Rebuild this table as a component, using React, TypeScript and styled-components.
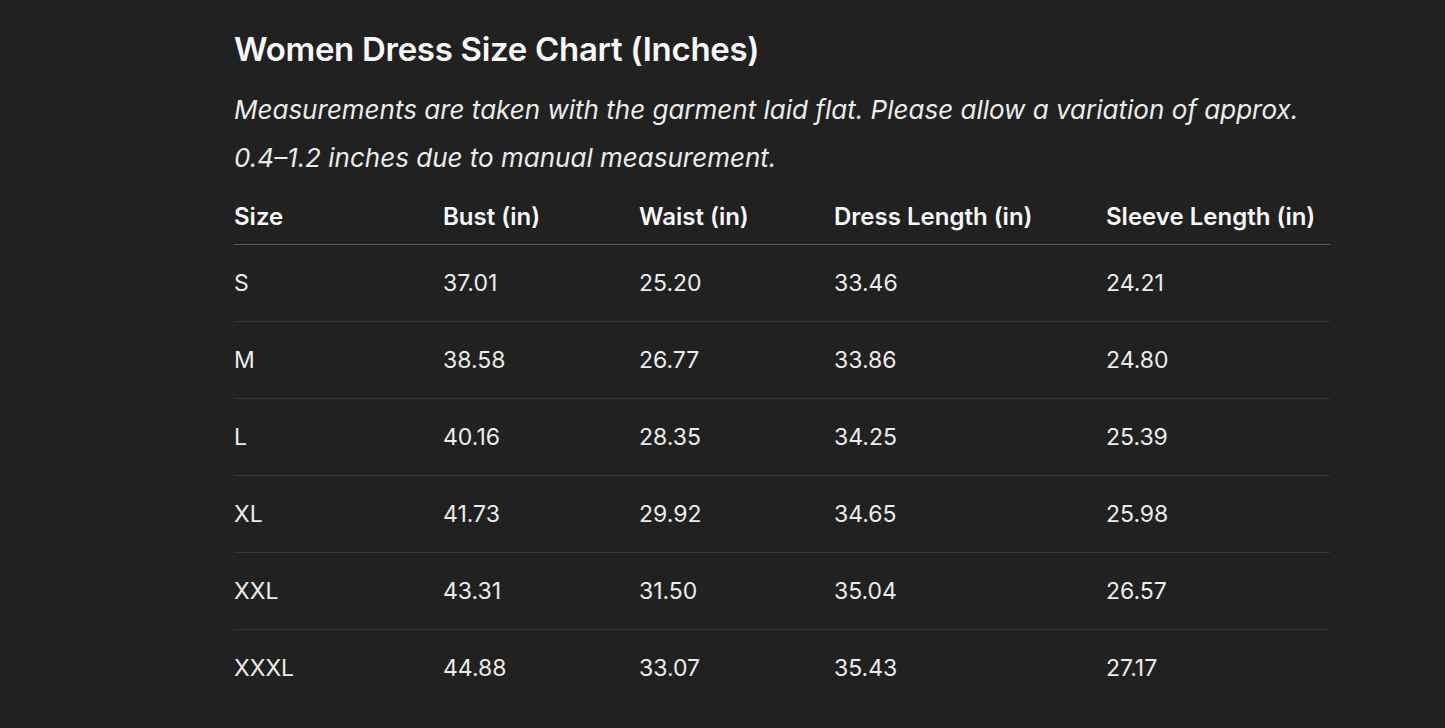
import styled, { createGlobalStyle } from 'styled-components';

const GlobalStyle = createGlobalStyle`
  html, body {
    margin: 0;
    padding: 0;
    background: #212121;
  }
  body {
    font-family: Inter, 'Noto Sans', sans-serif;
    color: #f4f4f4;
  }
`;

const Page = styled.main`
  min-height: 728px;
  padding: 27px 115px 0 234px;
  box-sizing: border-box;
  background: #212121;
`;

const Title = styled.h1`
  margin: 0;
  font-size: 33px;
  line-height: 44px;
  font-weight: 600;
  letter-spacing: -0.3px;
  color: #f7f7f7;
`;

const Note = styled.p`
  margin: 15px 0 0;
  font-size: 26px;
  line-height: 48px;
  font-style: italic;
  font-weight: 400;
  color: #ececec;
`;

const Table = styled.div`
  display: grid;
  grid-template-columns: 209px 196px 195px 272px 1fr;
`;

const Row = styled.div<{ $head?: boolean; $last?: boolean }>`
  display: contents;

  & > div {
    display: flex;
    align-items: center;
    height: ${(p) => (p.$head ? '63px' : '77px')};
    padding-top: ${(p) => (p.$head ? '6px' : '0')};
    box-sizing: border-box;
    border-bottom: 1px solid
      ${(p) => (p.$head ? '#5b5b5b' : p.$last ? 'transparent' : '#363636')};
    font-size: ${(p) => (p.$head ? '24px' : '23px')};
    font-weight: ${(p) => (p.$head ? 600 : 400)};
    color: ${(p) => (p.$head ? '#f7f7f7' : '#ececec')};
  }
`;

const headers = ['Size', 'Bust (in)', 'Waist (in)', 'Dress Length (in)', 'Sleeve Length (in)'];

const rows = [
  ['S', '37.01', '25.20', '33.46', '24.21'],
  ['M', '38.58', '26.77', '33.86', '24.80'],
  ['L', '40.16', '28.35', '34.25', '25.39'],
  ['XL', '41.73', '29.92', '34.65', '25.98'],
  ['XXL', '43.31', '31.50', '35.04', '26.57'],
  ['XXXL', '44.88', '33.07', '35.43', '27.17'],
];

const App = () => {
  return (
    <>
      <GlobalStyle />
      <Page>
        <Title>Women Dress Size Chart (Inches)</Title>
        <Note>
          Measurements are taken with the garment laid flat. Please allow a variation of approx.
          0.4–1.2 inches due to manual measurement.
        </Note>
        <Table>
          <Row $head>
            {headers.map((h) => (
              <div key={h}>{h}</div>
            ))}
          </Row>
          {rows.map((r, i) => (
            <Row key={r[0]} $last={i === rows.length - 1}>
              {r.map((cell, j) => (
                <div key={j}>{cell}</div>
              ))}
            </Row>
          ))}
        </Table>
      </Page>
    </>
  );
};

export default App;
